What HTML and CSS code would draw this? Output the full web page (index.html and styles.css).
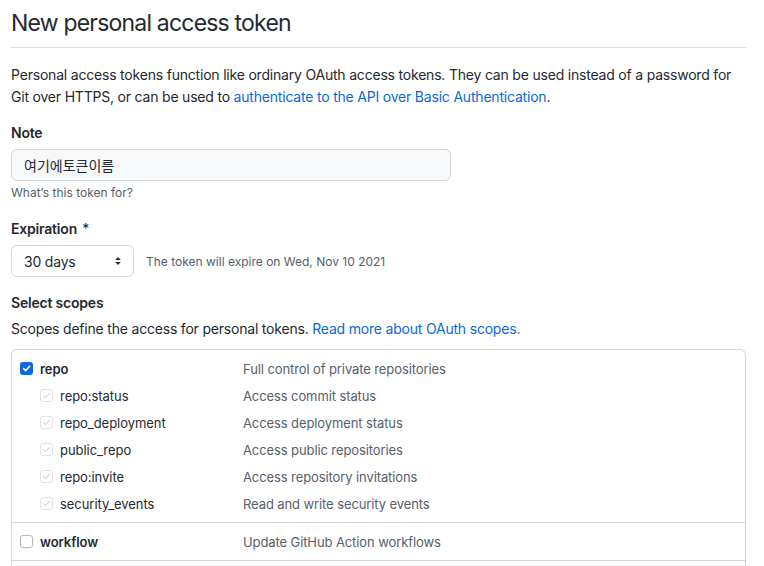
FILE: index.html
```html
<!DOCTYPE html>
<html lang="en">
<head>
<meta charset="utf-8">
<title>New personal access token</title>
<link rel="stylesheet" href="styles.css">
</head>
<body>
<div class="page">
  <h1 class="title">New personal access token</h1>
  <p class="intro">Personal access tokens function like ordinary OAuth access tokens. They can be used instead of a password for Git over HTTPS, or can be used to <a href="#" class="link">authenticate to the API over Basic Authentication</a>.</p>

  <div class="group">
    <label class="label">Note</label>
    <div class="input">여기에토큰이름</div>
    <p class="note">What’s this token for?</p>
  </div>

  <div class="group">
    <label class="label">Expiration <span class="req">*</span></label>
    <div class="exp-row">
      <div class="select">
        <span>30 days</span>
        <svg class="arrows" width="8" height="12" viewBox="0 0 8 12"><path d="M4 2 L6.8 5 H1.2 Z M4 10 L6.8 7 H1.2 Z" fill="#24292f"/></svg>
      </div>
      <span class="exp-note">The token will expire on Wed, Nov 10 2021</span>
    </div>
  </div>

  <div class="group scopes-group">
    <div class="label">Select scopes</div>
    <p class="scopes-desc">Scopes define the access for personal tokens. <a href="#" class="link">Read more about OAuth scopes.</a></p>
  </div>

  <div class="scopes">
    <div class="scope-section">
      <div class="row">
        <span class="name main"><span class="cb checked"><svg width="9" height="9" viewBox="0 0 10 10"><path d="M1.8 5.2 L4 7.4 L8.3 2.6" stroke="#fff" stroke-width="1.8" fill="none" stroke-linecap="round" stroke-linejoin="round"/></svg></span>repo</span>
        <span class="desc">Full control of private repositories</span>
      </div>
      <div class="row sub">
        <span class="name"><span class="cb disabled"><svg width="9" height="9" viewBox="0 0 10 10"><path d="M1.8 5.2 L4 7.4 L8.3 2.6" stroke="#c3c3c3" stroke-width="1.1" fill="none" stroke-linecap="round" stroke-linejoin="round"/></svg></span>repo:status</span>
        <span class="desc">Access commit status</span>
      </div>
      <div class="row sub">
        <span class="name"><span class="cb disabled"><svg width="9" height="9" viewBox="0 0 10 10"><path d="M1.8 5.2 L4 7.4 L8.3 2.6" stroke="#c3c3c3" stroke-width="1.1" fill="none" stroke-linecap="round" stroke-linejoin="round"/></svg></span>repo_deployment</span>
        <span class="desc">Access deployment status</span>
      </div>
      <div class="row sub">
        <span class="name"><span class="cb disabled"><svg width="9" height="9" viewBox="0 0 10 10"><path d="M1.8 5.2 L4 7.4 L8.3 2.6" stroke="#c3c3c3" stroke-width="1.1" fill="none" stroke-linecap="round" stroke-linejoin="round"/></svg></span>public_repo</span>
        <span class="desc">Access public repositories</span>
      </div>
      <div class="row sub">
        <span class="name"><span class="cb disabled"><svg width="9" height="9" viewBox="0 0 10 10"><path d="M1.8 5.2 L4 7.4 L8.3 2.6" stroke="#c3c3c3" stroke-width="1.1" fill="none" stroke-linecap="round" stroke-linejoin="round"/></svg></span>repo:invite</span>
        <span class="desc">Access repository invitations</span>
      </div>
      <div class="row sub">
        <span class="name"><span class="cb disabled"><svg width="9" height="9" viewBox="0 0 10 10"><path d="M1.8 5.2 L4 7.4 L8.3 2.6" stroke="#c3c3c3" stroke-width="1.1" fill="none" stroke-linecap="round" stroke-linejoin="round"/></svg></span>security_events</span>
        <span class="desc">Read and write security events</span>
      </div>
    </div>
    <div class="scope-section">
      <div class="row">
        <span class="name main"><span class="cb empty"></span>workflow</span>
        <span class="desc">Update GitHub Action workflows</span>
      </div>
    </div>
    <div class="scope-section tail"></div>
  </div>
</div>
</body>
</html>
```
FILE: styles.css
```css
* { box-sizing: border-box; }
html, body { margin: 0; padding: 0; background: #fff; }
body {
  font-family: Inter, "Noto Sans", "Liberation Sans", "Noto Sans CJK KR", sans-serif;
  color: #24292f;
  font-size: 14px;
  letter-spacing: -0.2px;
}
.page {
  width: 746px;
  padding: 8px 0 0 11px;
}
.title {
  margin: 0;
  font-size: 23px;
  letter-spacing: -0.8px;
  font-weight: 400;
  line-height: 30px;
  padding-bottom: 9px;
  border-bottom: 1px solid #d8dee4;
}
.intro {
  margin: 16px 0 0;
  line-height: 22px;
}
.link { color: #0969da; text-decoration: none; }
.group { margin-top: 15px; }
.label {
  display: block;
  font-weight: 600;
  line-height: 20px;
}
.req { font-weight: 400; margin-left: 2px; }
.input {
  margin-top: 6px;
  width: 440px;
  height: 32px;
  padding: 0 12px;
  display: flex;
  align-items: center;
  background: #f6f8fa;
  border: 1px solid #d0d7de;
  border-radius: 6px;
  font-family: "Noto Sans CJK KR", sans-serif;
  font-size: 14px;
  letter-spacing: 0;
}
.note {
  margin: 3px 0 0;
  font-size: 12px;
  letter-spacing: 0;
  line-height: 18px;
  color: #57606a;
}
.group + .group { margin-top: 17px; }
.exp-row {
  margin-top: 6px;
  display: flex;
  align-items: center;
  gap: 12px;
}
.select {
  width: 123px;
  height: 32px;
  padding: 0 11px 0 12px;
  display: flex;
  align-items: center;
  justify-content: space-between;
  border: 1px solid #d0d7de;
  border-radius: 6px;
  background: #fff;
}
.exp-note {
  font-size: 12px;
  letter-spacing: 0;
  color: #57606a;
}
.group.scopes-group { margin-top: 16px; }
.scopes-desc {
  margin: 6px 0 0;
  line-height: 20px;
}
.scopes {
  margin-top: 10px;
  width: 735px;
  border: 1px solid #d0d7de;
  border-bottom: 0;
  border-radius: 6px 6px 0 0;
}
.scope-section {
  padding: 5px 0;
  border-bottom: 1px solid #d0d7de;
}
.scope-section.tail { height: 12px; border-bottom: 0; }
.row {
  display: grid;
  grid-template-columns: 223px 1fr;
  align-items: center;
  height: 27px;
  padding-left: 8px;
  font-size: 13px;
  letter-spacing: -0.05px;
}
.name {
  display: flex;
  align-items: center;
  gap: 7px;
}
.name.main { font-weight: 600; }
.row.sub .name { padding-left: 20px; }
.desc { color: #57606a; letter-spacing: -0.1px; }
.cb {
  width: 13px;
  height: 13px;
  border-radius: 3px;
  display: inline-flex;
  align-items: center;
  justify-content: center;
  flex: none;
}
.cb.checked { background: #0969da; }
.cb.disabled { border: 1px solid #e1e1e1; background: #fff; }
.cb.empty { border: 1px solid #b6b6b6; background: #fff; }
.arrows { display: block; }
```
